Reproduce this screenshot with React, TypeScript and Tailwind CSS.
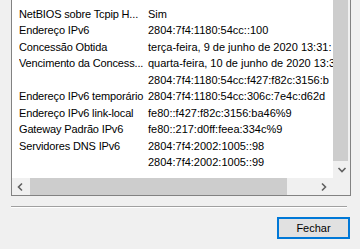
import React from "react";

const rows: [string, string][] = [
  ["NetBIOS sobre Tcpip H...", "Sim"],
  ["Endereço IPv6", "2804:7f4:1180:54cc::100"],
  ["Concessão Obtida", "terça-feira, 9 de junho de 2020 13:31:"],
  ["Vencimento da Concess...", "quarta-feira, 10 de junho de 2020 13:3"],
  ["", "2804:7f4:1180:54cc:f427:f82c:3156:b"],
  ["Endereço IPv6 temporário", "2804:7f4:1180:54cc:306c:7e4c:d62d"],
  ["Endereço IPv6 link-local", "fe80::f427:f82c:3156:ba46%9"],
  ["Gateway Padrão IPv6", "fe80::217:d0ff:feea:334c%9"],
  ["Servidores DNS IPv6", "2804:7f4:2002:1005::98"],
  ["", "2804:7f4:2002:1005::99"],
];

function Chevron({ dir }: { dir: "left" | "right" | "down" }) {
  const d =
    dir === "left" ? "M6 1.5 2.5 5 6 8.5" : dir === "right" ? "M3 1.5 6.5 5 3 8.5" : "M1.5 3 5 6.5 8.5 3";
  return (
    <svg width="10" height="10" viewBox="0 0 10 10">
      <path d={d} fill="none" stroke="#606060" strokeWidth="1.6" />
    </svg>
  );
}

export default function App() {
  return (
    <div
      className="w-[360px] h-[249px] bg-[#f0f0f0] overflow-hidden text-[11px] text-black"
      style={{ fontFamily: '"Liberation Sans", Arial, sans-serif' }}
    >
      {/* list view */}
      <div className="ml-[11px] w-[340px] h-[196px] border-x border-b border-[#828282] flex flex-col">
        <div className="flex h-[178px]">
          <div className="flex-1 bg-white overflow-hidden pt-[6px]">
            {rows.map(([k, v], i) => (
              <div key={i} className="flex h-[16.5px] items-center pl-[7px] whitespace-nowrap leading-none">
                <span className="w-[129px] shrink-0 overflow-hidden tracking-[-0.15px]">{k}</span>
                <span>{v}</span>
              </div>
            ))}
          </div>
          <div className="w-[17px] flex flex-col bg-[#f0f0f0]">
            <div className="h-[161px] mr-[2px] bg-[#cdcdcd]" />
            <div className="h-[17px] flex items-center justify-center">
              <Chevron dir="down" />
            </div>
          </div>
        </div>
        <div className="flex h-[17px] bg-[#f0f0f0]">
          <div className="w-[17px] flex items-center justify-center">
            <Chevron dir="left" />
          </div>
          <div className="ml-[1px] w-[257px] bg-[#cdcdcd]" />
          <div className="flex-1" />
          <div className="w-[34px] flex items-center justify-start pl-[3px]">
            <Chevron dir="right" />
          </div>
        </div>
      </div>

      {/* separator */}
      <div className="mt-[10px] ml-[11px] w-[336px] h-px bg-[#a0a0a0]" />
      <div className="ml-[11px] w-[336px] h-px bg-white" />

      {/* button */}
      <div className="mt-[9px] ml-[277px] w-[73px] h-[22px] border-2 border-[#0078d7] bg-[#e1e1e1] flex items-center justify-center">
        <span>Fechar</span>
      </div>
    </div>
  );
}
